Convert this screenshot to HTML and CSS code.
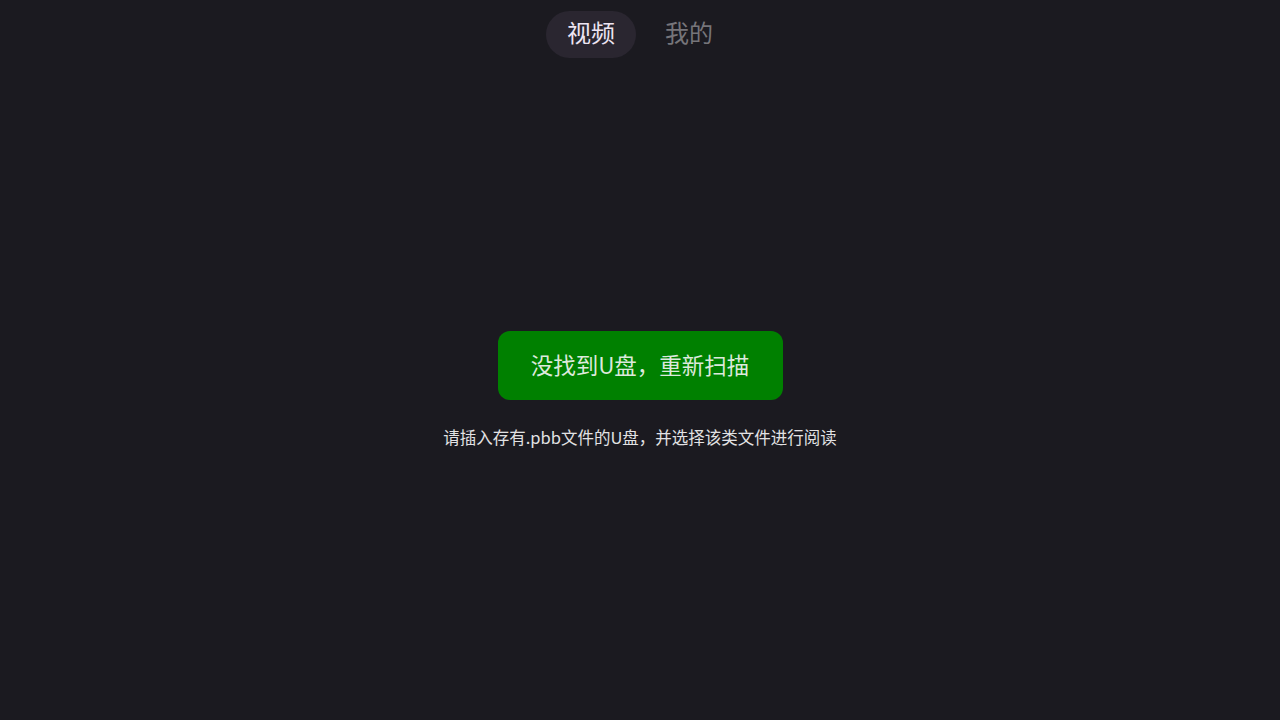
FILE: index.html
```html
<!DOCTYPE html>
<html lang="zh">
<head>
<meta charset="utf-8">
<link rel="stylesheet" href="styles.css">
</head>
<body>
<div class="app">
  <nav class="tabs">
    <div class="tab active">视频</div>
    <div class="tab">我的</div>
  </nav>
  <main class="empty">
    <button class="scan">没找到U盘，重新扫描</button>
    <p class="hint">请插入存有.pbb文件的U盘，并选择该类文件进行阅读</p>
  </main>
</div>
</body>
</html>
```
FILE: styles.css
```css
html, body {
  margin: 0;
  padding: 0;
  height: 100%;
}
body {
  background: #1b1a20;
  font-family: "Noto Sans CJK SC", "Noto Sans", sans-serif;
}
.app {
  height: 720px;
  display: flex;
  flex-direction: column;
}
.tabs {
  display: flex;
  justify-content: center;
  gap: 8px;
  padding-top: 11px;
}
.tab {
  width: 90px;
  height: 47px;
  box-sizing: border-box;
  padding-bottom: 5px;
  border-radius: 24px;
  display: flex;
  align-items: center;
  justify-content: center;
  font-size: 24px;
  line-height: 1;
  color: #76757a;
}
.tab.active {
  background: #2a2630;
  color: #ece4f2;
}
.empty {
  flex: 1;
  display: flex;
  flex-direction: column;
  align-items: center;
  padding-top: 273px;
}
.scan {
  width: 285px;
  height: 69px;
  box-sizing: border-box;
  padding: 0 0 3px;
  border: none;
  border-radius: 12px;
  background: #008000;
  color: #dce9dc;
  font-family: inherit;
  font-size: 22.5px;
  line-height: 1;
}
.hint {
  margin: 25px 0 0;
  font-size: 16.5px;
  line-height: 24px;
  color: #e2e2e4;
}
```
